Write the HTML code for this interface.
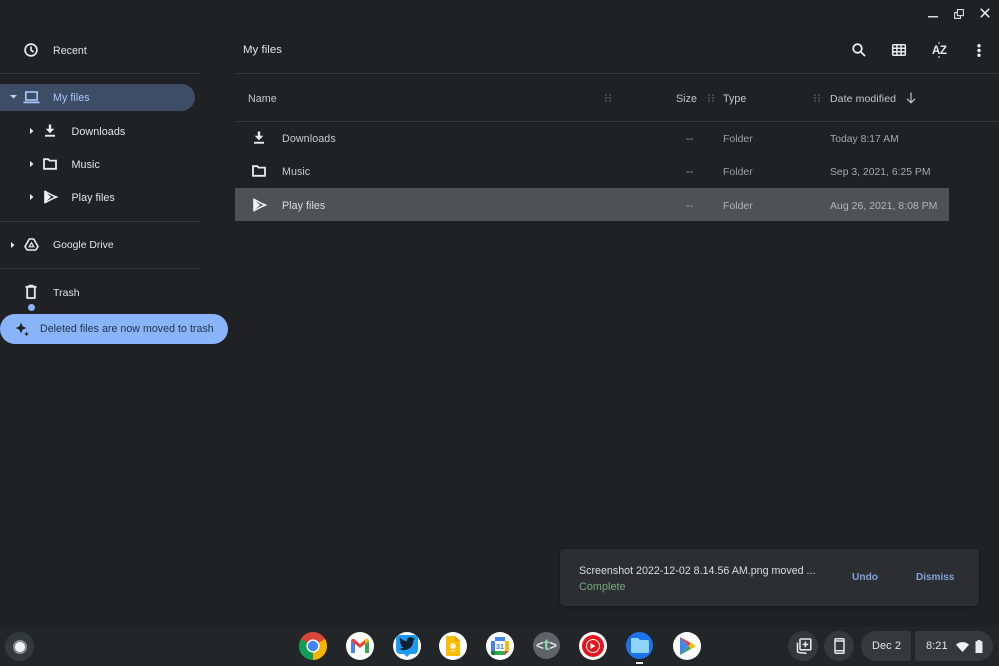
<!DOCTYPE html>
<html><head><meta charset="utf-8">
<style>
html,body{margin:0;padding:0;background:#202124}
#r{position:relative;width:999px;height:666px;overflow:hidden;background:#202124;font-family:"Liberation Sans",sans-serif;font-size:10.6px;color:#e3e4e6;filter:blur(.3px)}
.t{position:absolute;white-space:nowrap;line-height:14px;letter-spacing:.05px}
.b{position:absolute}
svg{position:absolute;overflow:visible}
.l{position:absolute;height:1px;background:#34363a}
.c{position:absolute;border-radius:50%}
.h{color:#c4c7c9;font-size:10.7px}
.d{font-size:10.3px;letter-spacing:0}
</style></head><body><div id="r">

<!-- sidebar -->
<div class="t" style="left:53px;top:44px">Recent</div>
<svg style="left:24px;top:43px" width="14" height="14" viewBox="0 0 14 14" fill="none" stroke="#e8eaed" stroke-width="1.7"><circle cx="7" cy="7" r="5.9"/><path d="M7 3.500V7.200L9.600 9"/></svg>
<div class="l" style="left:0;top:73px;width:200px"></div>

<div class="b" style="left:0;top:84px;width:195px;height:27px;background:#3d4d66;border-radius:0 14px 14px 0"></div>
<div class="t" style="left:53px;top:91px;color:#a8c7fa;font-size:10.700px">My files</div>
<svg style="left:10px;top:95px" width="7" height="4" viewBox="0 0 7 4"><path d="M0 0H7L3.500 3.500Z" fill="#c6d4ea"/></svg>
<svg style="left:23px;top:91px" width="17" height="13" viewBox="0 0 17 13" fill="none"><rect x="2.800" y="1" width="11.400" height="8" stroke="#a8c7fa" stroke-width="1.600"/><rect x=".5" y="10.500" width="16" height="1.800" fill="#a8c7fa"/></svg>

<svg style="left:30px;top:128px" width="4" height="6" viewBox="0 0 4 6"><path d="M0 0L3.500 3L0 6Z" fill="#e8eaed"/></svg>
<svg style="left:44px;top:124px" width="12" height="14" viewBox="0 0 12 14" fill="#e8eaed"><path d="M4.800 .5H7.200V4.800H10.300L6 9.400 1.700 4.800H4.800Z"/><rect x="1" y="10.800" width="10" height="1.900"/></svg>
<div class="t" style="left:71.500px;top:125px;font-size:10.800px">Downloads</div>

<svg style="left:30px;top:161px" width="4" height="6" viewBox="0 0 4 6"><path d="M0 0L3.500 3L0 6Z" fill="#e8eaed"/></svg>
<svg style="left:43px;top:158px" width="14" height="12" viewBox="0 0 14 12" fill="none" stroke="#e8eaed" stroke-width="1.800"><path d="M1 1.200H5.300L6.600 2.600H13V10.800H1Z"/></svg>
<div class="t" style="left:71.500px;top:158px;font-size:10.800px">Music</div>

<svg style="left:30px;top:194px" width="4" height="6" viewBox="0 0 4 6"><path d="M0 0L3.500 3L0 6Z" fill="#e8eaed"/></svg>
<svg style="left:43px;top:190px" width="14" height="14" viewBox="0 0 14 14" fill="none"><path d="M1.200 .8V13.200L8 7Z" fill="#f1f3f4"/><path d="M1.500 1L9.500 5.500L13.500 7L9.500 8.700L1.500 13" stroke="#f1f3f4" stroke-width="1.500"/></svg>
<div class="t" style="left:71.500px;top:191px;font-size:10.700px">Play files</div>

<div class="l" style="left:0;top:221px;width:200px"></div>
<svg style="left:11px;top:242px" width="4" height="6" viewBox="0 0 4 6"><path d="M0 0L3.500 3L0 6Z" fill="#e8eaed"/></svg>
<svg style="left:24px;top:238px" width="15" height="13" viewBox="0 0 15 13" fill="none" stroke="#e8eaed" stroke-width="1.600"><path d="M5.300 1H9.700L14 8.600 11.800 12H3.200L1 8.600Z"/><path d="M7.500 4.800L9.800 8.800H5.200Z" stroke-width="1.200"/></svg>
<div class="t" style="left:53px;top:239px;font-size:10.400px;letter-spacing:0">Google Drive</div>

<div class="l" style="left:0;top:268px;width:200px"></div>
<svg style="left:25px;top:285px" width="12" height="14" viewBox="0 0 12 14" fill="none" stroke="#e8eaed" stroke-width="1.800"><path d="M2.200 2.500V13H9.800V2.500"/><path d="M.5 1.800H11.500M3.500 .7H8.500"/></svg>
<div class="t" style="left:53px;top:286px;font-size:10.500px">Trash</div>
<div class="c" style="left:28px;top:304px;width:7px;height:7px;background:#8ab4f8"></div>

<div class="b" style="left:0;top:314px;width:228px;height:30px;background:#8ab4f8;border-radius:15px"></div>
<svg style="left:15px;top:322px" width="14" height="14" viewBox="0 0 14 14" fill="#202124"><path d="M6 .5L7.600 4.400 11.500 6 7.600 7.600 6 11.500 4.400 7.600 .5 6 4.400 4.400Z"/><path d="M11.500 9.500L12.200 11.300 14 12 12.200 12.700 11.500 14.500 10.800 12.700 9 12 10.800 11.300Z"/></svg>
<div class="t" style="left:40px;top:322px;color:#24344f;font-size:10.600px;letter-spacing:.05px">Deleted files are now moved to trash</div>

<!-- toolbar -->
<div class="t" style="left:243px;top:43px;font-size:11.400px;color:#e3e4e6">My files</div>
<div class="l" style="left:235px;top:73px;width:764px"></div>
<svg style="left:852px;top:43px" width="14" height="14" viewBox="0 0 14 14" fill="none" stroke="#e8eaed" stroke-width="1.800"><circle cx="5.500" cy="5.500" r="4.300"/><path d="M8.700 8.700L13 13"/></svg>
<svg style="left:892px;top:44px" width="14" height="12" viewBox="0 0 14 12" fill="none" stroke="#e8eaed" stroke-width="1.500"><rect x=".7" y=".7" width="12.600" height="10.600" rx="1"/><path d="M.7 4.200H13.300M.7 7.800H13.300M4.900 .7V11.300M9.100 .7V11.300"/></svg>
<div class="t" style="left:932px;top:44px;font-size:11.500px;font-weight:bold;color:#e8eaed;letter-spacing:-.4px">AZ</div>
<svg style="left:937px;top:41px" width="4" height="18" viewBox="0 0 4 18"><path d="M2 1V3" stroke="#e8eaed"/><path d="M2 15V17" stroke="#e8eaed"/></svg>
<svg style="left:977px;top:44px" width="4" height="13" viewBox="0 0 4 13" fill="#e8eaed"><circle cx="2" cy="1.700" r="1.700"/><circle cx="2" cy="6.500" r="1.700"/><circle cx="2" cy="11.300" r="1.700"/></svg>

<!-- window controls -->
<svg style="left:928px;top:16px" width="10" height="2"><rect width="10" height="1.500" fill="#dadce0"/></svg>
<svg style="left:954px;top:9px" width="10" height="10" viewBox="0 0 10 10" fill="none" stroke="#dadce0" stroke-width="1.100"><rect x="3.400" y=".6" width="6" height="6"/><path d="M3.400 3.600H.6V9.400H6.400V6.600"/></svg>
<svg style="left:980px;top:8px" width="10" height="10" viewBox="0 0 10 10" stroke="#e8eaed" stroke-width="1.500"><path d="M.8 .8L9.200 9.200M9.200 .8L.8 9.200"/></svg>

<!-- table header -->
<div class="t h" style="left:248px;top:92px">Name</div>
<div class="t h" style="left:676px;top:92px">Size</div>
<div class="t h" style="left:723px;top:92px">Type</div>
<div class="t h" style="left:830px;top:92px;font-size:10.500px;letter-spacing:.1px">Date modified</div>
<svg style="left:906px;top:92px" width="10" height="12" viewBox="0 0 10 12" fill="none" stroke="#c4c7c9" stroke-width="1.200"><path d="M5 .5V10.500M1 6.800L5 10.800 9 6.800"/></svg>
<svg style="left:605px;top:94px" width="6" height="8" fill="#6f7276"><circle cx="1" cy="1" r=".8"/><circle cx="5" cy="1" r=".8"/><circle cx="1" cy="4" r=".8"/><circle cx="5" cy="4" r=".8"/><circle cx="1" cy="7" r=".8"/><circle cx="5" cy="7" r=".8"/></svg>
<svg style="left:708px;top:94px" width="6" height="8" fill="#6f7276"><circle cx="1" cy="1" r=".8"/><circle cx="5" cy="1" r=".8"/><circle cx="1" cy="4" r=".8"/><circle cx="5" cy="4" r=".8"/><circle cx="1" cy="7" r=".8"/><circle cx="5" cy="7" r=".8"/></svg>
<svg style="left:814px;top:94px" width="6" height="8" fill="#6f7276"><circle cx="1" cy="1" r=".8"/><circle cx="5" cy="1" r=".8"/><circle cx="1" cy="4" r=".8"/><circle cx="5" cy="4" r=".8"/><circle cx="1" cy="7" r=".8"/><circle cx="5" cy="7" r=".8"/></svg>
<div class="l" style="left:235px;top:121px;width:764px"></div>

<!-- rows -->
<div class="b" style="left:235px;top:188px;width:714px;height:33px;background:#505154"></div>
<svg style="left:253px;top:131px" width="12" height="14" viewBox="0 0 12 14" fill="#e8eaed"><path d="M4.800 .5H7.200V4.800H10.300L6 9.400 1.700 4.800H4.800Z"/><rect x="1" y="10.800" width="10" height="1.900"/></svg>
<svg style="left:252px;top:165px" width="14" height="12" viewBox="0 0 14 12" fill="none" stroke="#e8eaed" stroke-width="1.800"><path d="M1 1.200H5.300L6.600 2.600H13V10.800H1Z"/></svg>
<svg style="left:252px;top:198px" width="14" height="14" viewBox="0 0 14 14" fill="none"><path d="M1.200 .8V13.200L8 7Z" fill="#f1f3f4"/><path d="M1.500 1L9.500 5.500L13.500 7L9.500 8.700L1.500 13" stroke="#f1f3f4" stroke-width="1.500"/></svg>

<div class="t" style="left:282px;top:132px;color:#c9cacc;font-size:10.700px;letter-spacing:.1px">Downloads</div>
<div class="t" style="left:282px;top:165px;color:#c9cacc;font-size:10.700px">Music</div>
<div class="t" style="left:282px;top:199px;color:#d8d9da;font-size:10.700px">Play files</div>
<div class="t d" style="left:686px;top:132px;color:#9a9c9f;font-size:10.700px">--</div>
<div class="t d" style="left:686px;top:165px;color:#9a9c9f;font-size:10.700px">--</div>
<div class="t d" style="left:686px;top:199px;color:#a9aaac;font-size:10.700px">--</div>
<div class="t d" style="left:723px;top:132px;color:#9fa1a4;font-size:10.500px">Folder</div>
<div class="t d" style="left:723px;top:165px;color:#9fa1a4;font-size:10.500px">Folder</div>
<div class="t d" style="left:723px;top:199px;color:#b0b1b3;font-size:10.500px">Folder</div>
<div class="t d" style="left:830px;top:133px;color:#a6a8ab;font-size:10.400px">Today 8:17 AM</div>
<div class="t d" style="left:830px;top:166px;color:#a6a8ab;font-size:10.400px">Sep 3, 2021, 6:25 PM</div>
<div class="t d" style="left:830px;top:199px;color:#b4b5b7;font-size:10.500px">Aug 26, 2021, 8:08 PM</div>

<!-- toast -->
<div class="b" style="left:560px;top:549px;width:419px;height:57px;background:#2d2e31;border-radius:4px;box-shadow:0 1px 3px rgba(0,0,0,.3)"></div>
<div class="t" style="left:579px;top:564px;color:#dcdde0;font-size:10.700px;letter-spacing:0">Screenshot 2022-12-02 8.14.56 AM.png moved ...</div>
<div class="t" style="left:579px;top:580px;color:#71a97e;font-size:10.800px">Complete</div>
<div class="t" style="left:852px;top:571px;color:#7fa3dc;font-weight:bold;font-size:10.200px;letter-spacing:0">Undo</div>
<div class="t" style="left:916px;top:571px;color:#7fa3dc;font-weight:bold;font-size:10px;letter-spacing:0">Dismiss</div>

<!-- shelf -->
<div class="b" style="left:0;top:627px;width:999px;height:39px;background:#232628"></div>
<div class="c" style="left:5px;top:632px;width:29px;height:29px;background:#34393b"></div>
<div class="c" style="left:13px;top:640px;width:10px;height:10px;border:2px solid #8d9092;background:#f1f3f4"></div>

<!-- chrome -->
<svg style="left:299px;top:632px" width="28" height="28" viewBox="0 0 28 28">
<circle cx="14" cy="14" r="14" fill="#db4437"/>
<path d="M14 14L1.900 7A14 14 0 0 0 14 28Z" fill="#0f9d58"/><path d="M14 14L14 28A14 14 0 0 0 26.100 7Z" fill="#f4b400"/><path d="M2 7A14 14 0 0 1 26.100 7H14Z" fill="#db4437"/>
<circle cx="14" cy="14" r="6.600" fill="#fff"/><circle cx="14" cy="14" r="5.200" fill="#4285f4"/></svg>
<!-- gmail -->
<div class="c" style="left:346px;top:632px;width:28px;height:28px;background:#fff"></div>
<svg style="left:351px;top:639px" width="18" height="14" viewBox="0 0 18 14"><path d="M0 2V14H4V5Z" fill="#4285f4"/><path d="M18 2V14H14V5Z" fill="#34a853"/><path d="M0 2C0 .5 1.500-.5 3 0L9 5 15 0C16.500-.5 18 .5 18 2L14 5 9 9 4 5Z" fill="#ea4335"/><path d="M14 5L18 2C18 .5 16.500-.5 15 0L14 1Z" fill="#fbbc04"/></svg>
<!-- twitter -->
<div class="c" style="left:393px;top:632px;width:28px;height:28px;background:#fff"></div>
<svg style="left:396px;top:635px" width="22" height="23" viewBox="0 0 22 23"><path d="M4 0H18A4 4 0 0 1 22 4V15A4 4 0 0 1 18 19H14L11 22 8 19H4A4 4 0 0 1 0 15V4A4 4 0 0 1 4 0Z" fill="#1d9bf0"/></svg>
<svg style="left:399px;top:637px" width="16" height="13.500" viewBox="0 0 24 20" fill="#10202e"><path d="M24 2.400c-.9.4-1.800.7-2.800.8 1-.6 1.800-1.600 2.200-2.700-1 .6-2 1-3.100 1.200A4.900 4.900 0 0 0 12 6.200C8 6 4.300 4 1.700.9c-1.300 2.200-.7 5.100 1.500 6.600-.8 0-1.600-.2-2.200-.6 0 2.300 1.600 4.400 3.900 4.900-.7.2-1.500.2-2.200.1.600 2 2.400 3.400 4.600 3.400A9.900 9.900 0 0 1 0 17.300 14 14 0 0 0 21.500 5c1-.7 1.800-1.600 2.500-2.600Z"/></svg>
<!-- keep -->
<div class="c" style="left:439px;top:632px;width:28px;height:28px;background:#fff"></div>
<svg style="left:446px;top:636px" width="14" height="20" viewBox="0 0 14 20"><path d="M1 0H9L14 5V18.500A1.500 1.500 0 0 1 12.500 20H1.500A1.500 1.500 0 0 1 0 18.500V1Z" fill="#fbbc04"/><path d="M9 0L14 5H9Z" fill="#f29900"/><circle cx="7" cy="10" r="3" fill="#fff3c4"/><rect x="5.500" y="14" width="3" height="1.500" fill="#fff3c4"/></svg>
<!-- calendar -->
<div class="c" style="left:486px;top:632px;width:28px;height:28px;background:#fff"></div>
<svg style="left:491px;top:637px" width="18" height="18" viewBox="0 0 18 18"><rect width="18" height="18" rx="2" fill="#fff"/><path d="M0 4V14H4V4Z" fill="#4285f4"/><path d="M4 0H14V4H4Z" fill="#4285f4"/><path d="M14 4H18V14H14Z" fill="#fbbc04"/><path d="M4 14H14V18H4Z" fill="#34a853"/><path d="M14 14H18L14 18Z" fill="#ea4335"/><path d="M0 14H4V18H2A2 2 0 0 1 0 16Z" fill="#188038"/><text x="9" y="12" text-anchor="middle" font-size="7.500" font-weight="bold" font-family="Liberation Sans" fill="#4285f4">31</text></svg>
<!-- t -->
<div class="c" style="left:533px;top:632px;width:27px;height:27px;background:#5f6368"></div>
<div class="t" style="left:533px;top:637px;width:27px;text-align:center;font-size:13.500px;font-weight:bold;color:#dfe1e3;letter-spacing:0;line-height:17px">&lt;<span style="color:#8fdcb8;font-size:16px">t</span>&gt;</div>
<!-- yt music -->
<div class="c" style="left:579px;top:632px;width:28px;height:28px;background:#fff"></div>
<div class="c" style="left:582px;top:635px;width:22px;height:22px;background:#e6141c"></div>
<div class="c" style="left:586px;top:639px;width:12px;height:12px;border:1.200px solid #fff"></div>
<svg style="left:590px;top:643px" width="6" height="6" viewBox="0 0 6 6"><path d="M.5 0L5.500 3 .5 6Z" fill="#fff"/></svg>
<!-- files -->
<div class="c" style="left:626px;top:632px;width:27px;height:27px;background:#1a73e8"></div>
<svg style="left:631px;top:638px" width="18" height="15" viewBox="0 0 18 15"><path d="M1.500 0H7L9 2H16.500A1.500 1.500 0 0 1 18 3.500V13.500A1.500 1.500 0 0 1 16.500 15H1.500A1.500 1.500 0 0 1 0 13.500V1.500A1.500 1.500 0 0 1 1.500 0Z" fill="#8ed4f8"/></svg>
<div class="b" style="left:636px;top:662px;width:7px;height:1.500px;background:#e8eaed"></div>
<!-- play -->
<div class="c" style="left:673px;top:632px;width:28px;height:28px;background:#fff"></div>
<svg style="left:680px;top:637px" width="16" height="18" viewBox="0 0 16 18"><path d="M0 0V18L8.500 9Z" fill="#4285f4"/><path d="M0 0L11 6 8.500 9Z" fill="#ea4335"/><path d="M0 18L11 12 8.500 9Z" fill="#34a853"/><path d="M11 6L16 9 11 12 8.500 9Z" fill="#fbbc04"/></svg>

<!-- tray -->
<div class="c" style="left:788px;top:631px;width:30px;height:30px;background:#36393c"></div>
<svg style="left:795px;top:638px" width="17" height="17" viewBox="0 0 17 17" fill="none" stroke="#e3e5e8" stroke-width="1.600"><rect x="5" y="1" width="10.800" height="10.800" rx="1"/><path d="M10.400 3.500V9.300M7.500 6.400H13.300"/><path d="M2.500 4.500V13.200A1.300 1.300 0 0 0 3.800 14.500L11.500 15.300"/></svg>
<div class="c" style="left:824px;top:631px;width:30px;height:30px;background:#36393c"></div>
<svg style="left:834px;top:638px" width="11" height="16" viewBox="0 0 11 16" fill="none" stroke="#e3e5e8" stroke-width="1.500"><rect x="1" y=".8" width="9" height="14.400" rx="1"/><path d="M1 3H10M1 12.800H10"/></svg>
<div class="b" style="left:861px;top:631px;width:50px;height:30px;background:#36393c;border-radius:15px 3px 3px 15px"></div>
<div class="t" style="left:872px;top:639px;font-size:11px;color:#e3e5e8">Dec 2</div>
<div class="b" style="left:915px;top:631px;width:78px;height:30px;background:#36393c;border-radius:3px 15px 15px 3px"></div>
<div class="t" style="left:926px;top:639px;font-size:11px;color:#e3e5e8">8:21</div>
<svg style="left:956px;top:642px" width="13" height="10" viewBox="0 0 13 10"><path d="M0 2.800C3.500-.8 9.500-.8 13 2.800L6.500 10Z" fill="#f1f3f4"/></svg>
<svg style="left:975px;top:640px" width="8" height="13" viewBox="0 0 8 13"><path d="M2.500 0H5.500V1.200H7.500V13H.5V1.200H2.500Z" fill="#e8eaed"/></svg>

</div></body></html>
